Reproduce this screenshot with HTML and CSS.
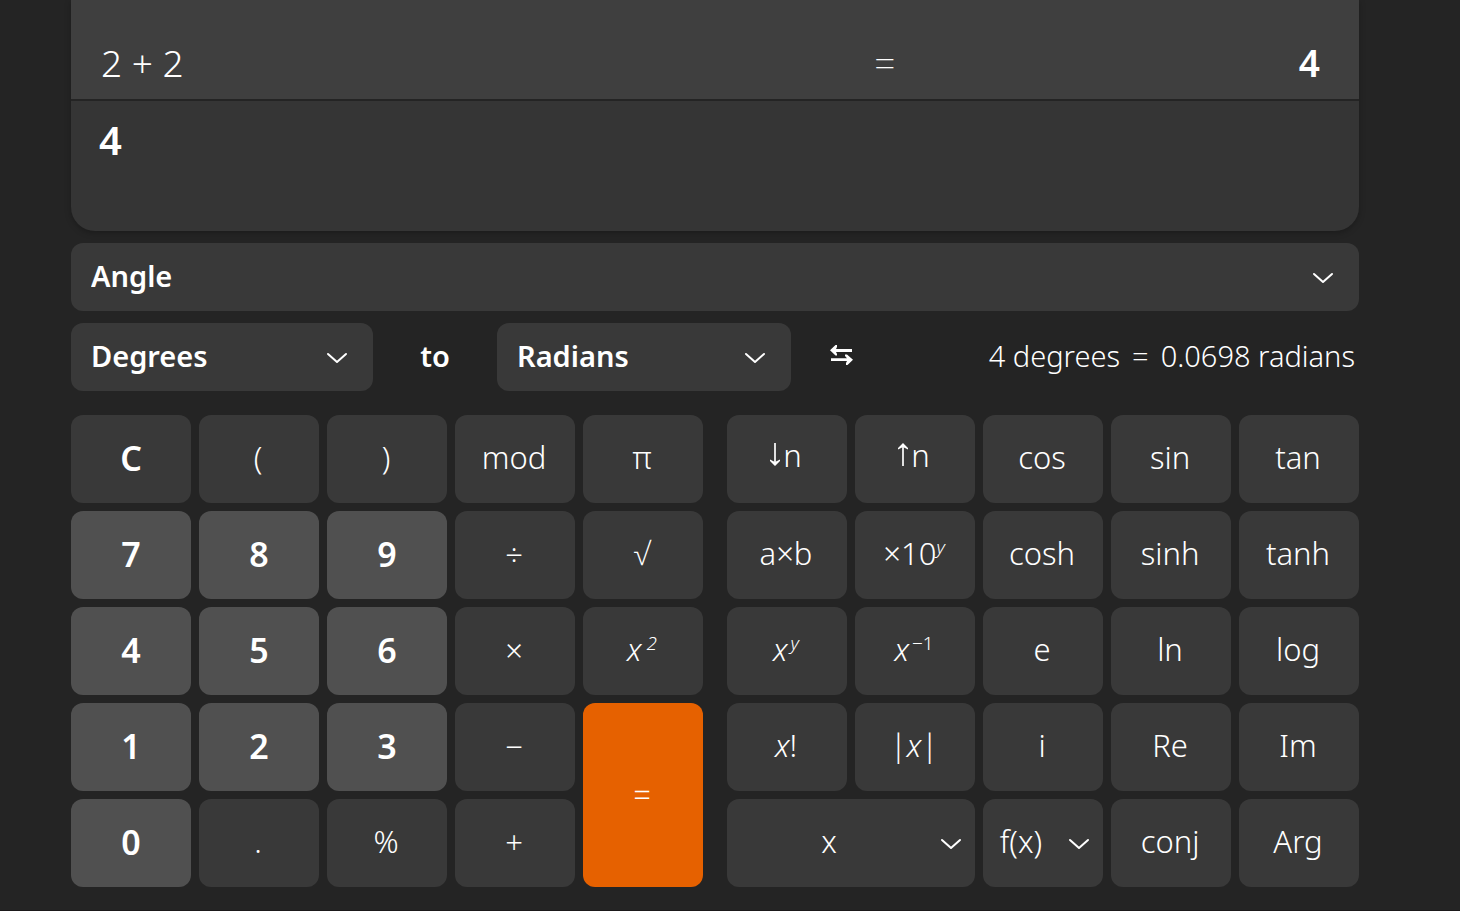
FILE: index.html
```html
<!DOCTYPE html>
<html lang="en">
<head>
<meta charset="utf-8">
<title>Calculator</title>
<link rel="stylesheet" href="styles.css">
</head>
<body>
<svg class="defs" aria-hidden="true">
  <symbol id="chevron" viewBox="0 0 24 24"><path d="M3 9 12 17 21 9" fill="none" stroke="currentColor" stroke-width="2" stroke-linecap="round" stroke-linejoin="round"/></symbol>
</svg>
<main class="calculator">
  <section class="display" aria-label="Display">
    <div class="history">
      <span class="history-expression">2 + 2</span>
      <span class="history-equals">=</span>
      <span class="history-result">4</span>
    </div>
    <input class="expression" type="text" value="4" aria-label="Expression">
  </section>

  <div class="picker">
    <select class="picker-select" aria-label="Category"><option>Angle</option></select>
    <svg class="chevron picker-chevron" aria-hidden="true"><use href="#chevron"/></svg>
  </div>

  <div class="conversion">
    <div class="picker">
      <select class="picker-select" aria-label="From unit"><option>Degrees</option></select>
      <svg class="chevron picker-chevron" aria-hidden="true"><use href="#chevron"/></svg>
    </div>
    <span class="to">to</span>
    <div class="picker">
      <select class="picker-select" aria-label="To unit"><option>Radians</option></select>
      <svg class="chevron picker-chevron" aria-hidden="true"><use href="#chevron"/></svg>
    </div>
    <button class="swap" type="button" aria-label="Swap units">
      <svg class="swap-icon" viewBox="0 0 24 24" aria-hidden="true"><path d="M1 7.300 6.500 2H8V4L7 6H23V9H7L8 11V12.500H6.500ZM24 16.700 18.500 22H17V20L18 18H2V15.300H18L16 13V11.500H18Z" fill="currentColor"/></svg>
    </button>
    <output class="conversion-result"><span>4 degrees</span><span>=</span><span>0.0698 radians</span></output>
  </div>

  <div class="keypads">
    <div class="keypad">
      <button class="key strong">C</button><button class="key">(</button><button class="key">)</button><button class="key">mod</button><button class="key">π</button>
      <button class="key digit">7</button><button class="key digit">8</button><button class="key digit">9</button><button class="key operator">÷</button><button class="key">√</button>
      <button class="key digit">4</button><button class="key digit">5</button><button class="key digit">6</button><button class="key operator">×</button><button class="key"><span><i>x</i><sup><i> 2</i></sup></span></button>
      <button class="key digit">1</button><button class="key digit">2</button><button class="key digit">3</button><button class="key operator">−</button><button class="key equals">=</button>
      <button class="key digit">0</button><button class="key">.</button><button class="key">%</button><button class="key operator">+</button>
    </div>
    <div class="keypad">
      <button class="key shift"><svg class="arrow" viewBox="0 0 10 24" aria-hidden="true"><path d="M5 0V20" fill="none" stroke="currentColor" stroke-width="1.700"/><path d="M0 16.500V18L5 23 10 18V16.500L5 19Z" fill="currentColor"/></svg>n</button><button class="key shift"><svg class="arrow" viewBox="0 0 10 24" aria-hidden="true"><path d="M5 23V3" fill="none" stroke="currentColor" stroke-width="1.700"/><path d="M0 6.500V5L5 0 10 5V6.500L5 4Z" fill="currentColor"/></svg>n</button><button class="key">cos</button><button class="key">sin</button><button class="key">tan</button>
      <button class="key">a×b</button><button class="key"><span>×10<sup><i>y</i></sup></span></button><button class="key">cosh</button><button class="key">sinh</button><button class="key">tanh</button>
      <button class="key"><span><i>x</i><sup class="spaced"><i>y</i></sup></span></button><button class="key"><span><i>x</i><sup class="spaced">−1</sup></span></button><button class="key">e</button><button class="key">ln</button><button class="key">log</button>
      <button class="key"><span><i>x</i>!</span></button><button class="key"><span>|<i>x</i>|</span></button><button class="key">i</button><button class="key">Re</button><button class="key">Im</button>
      <button class="key menu wide" aria-haspopup="menu"><span class="menu-label">x</span><svg class="chevron" aria-hidden="true"><use href="#chevron"/></svg></button><button class="key menu" aria-haspopup="menu"><span class="menu-label">f(x)</span><svg class="chevron" aria-hidden="true"><use href="#chevron"/></svg></button><button class="key">conj</button><button class="key">Arg</button>
    </div>
  </div>
</main>
</body>
</html>
```

FILE: styles.css
```css
* { box-sizing: border-box; }

body {
  margin: 0;
  min-height: 100vh;
  background: #242424;
  border-bottom: 1px solid #1b191a;
  color: #fff;
  font-family: "Noto Sans", "Open Sans", sans-serif;
  font-weight: 300;
}

button, input, select { font: inherit; color: inherit; border: 0; margin: 0; }

.defs { position: absolute; width: 0; height: 0; }

.calculator {
  display: flex;
  flex-direction: column;
  gap: 12px;
  padding: 0 101px 23px 71px;
}

.display {
  border-radius: 0 0 24px 24px;
  background: #353535;
  overflow: hidden;
  box-shadow: 0 2px 6px rgb(0 0 0 / 25%);
}

.history {
  display: grid;
  grid-template-columns: 774fr 152fr 294fr;
  align-items: center;
  padding: 35px 39px 8px 30px;
  background: #3f3f3f;
  border-bottom: 2px solid #242424;
  font-size: 37px;
  line-height: 56px;
}

.history-equals { font-weight: 200; }
.history-result { font-weight: 600; text-align: right; }

.expression {
  display: block;
  width: 100%;
  padding: 11px 28px 63px;
  background: transparent;
  font-size: 40px;
  line-height: 56px;
  font-weight: 600;
}

.picker { display: grid; align-items: center; }

.picker-select {
  grid-area: 1 / 1;
  appearance: none;
  width: 100%;
  min-height: 68px;
  padding: 0 60px 4px 20px;
  border-radius: 12px;
  background: #393939;
  font-size: 29px;
  font-weight: 600;
}

.picker-chevron { grid-area: 1 / 1; justify-self: end; margin-right: 24px; pointer-events: none; }

.chevron { width: 24px; height: 24px; flex: none; }

.conversion {
  display: grid;
  grid-template-columns: 302fr 124fr 294fr 100fr 468fr;
  align-items: center;
  font-size: 29px;
}

.to { text-align: center; font-weight: 600; padding-bottom: 4px; }

.swap { display: grid; place-items: center; padding: 0 0 4px; background: none; }
.swap-icon { width: 24px; height: 24px; }

.conversion-result {
  display: flex;
  justify-content: flex-end;
  gap: 12px;
  padding: 0 4px 4px 0;
  white-space: nowrap;
}

.keypads { display: grid; grid-template-columns: 1fr 1fr; gap: 24px; padding-top: 12px; }

.keypad {
  display: grid;
  grid-template-columns: repeat(5, minmax(0, 1fr));
  grid-auto-rows: minmax(88px, auto);
  gap: 8px;
}

.key {
  display: flex;
  align-items: center;
  justify-content: center;
  padding: 0 2px 4px 0;
  border-radius: 12px;
  background: #393939;
  font-size: 31px;
  line-height: 40px;
}

.strong, .digit { padding: 0 0 2px; font-size: 34px; font-weight: 600; }
.digit { background: #505050; }
.shift { padding-bottom: 8px; }
.operator { padding-bottom: 2px; }
.equals { grid-row: span 2; padding-bottom: 2px; background: #e66100; }
.wide { grid-column: span 2; }
.menu { gap: 8px; padding-right: 12px; }
.menu-label { flex: 1; }
.menu .chevron { margin-top: 4px; }
.arrow { width: 10px; height: 24px; margin-right: 3px; }

sup { font-size: 19px; line-height: 0; white-space: pre; }
.spaced { margin-left: 3px; }
```
